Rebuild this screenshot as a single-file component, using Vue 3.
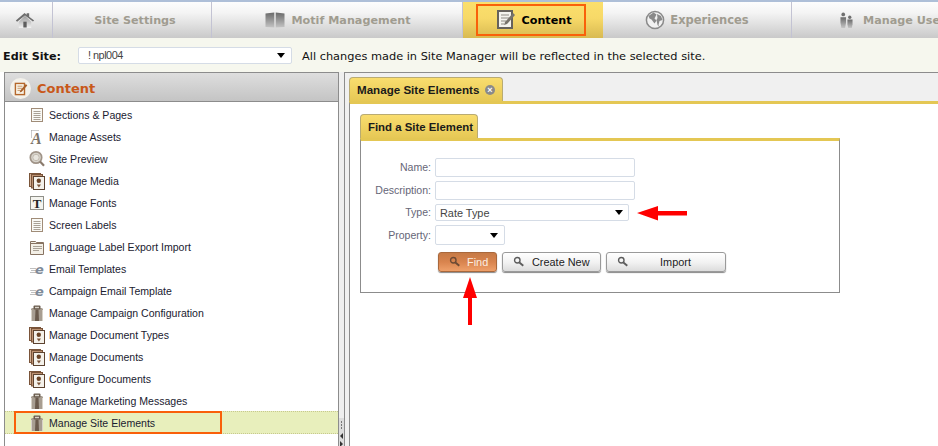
<script setup>
const items = [
  { label: 'Sections & Pages', icon: 'page' },
  { label: 'Manage Assets', icon: 'asset' },
  { label: 'Site Preview', icon: 'lens' },
  { label: 'Manage Media', icon: 'media' },
  { label: 'Manage Fonts', icon: 'font' },
  { label: 'Screen Labels', icon: 'page' },
  { label: 'Language Label Export Import', icon: 'folder' },
  { label: 'Email Templates', icon: 'mail' },
  { label: 'Campaign Email Template', icon: 'mail' },
  { label: 'Manage Campaign Configuration', icon: 'tie' },
  { label: 'Manage Document Types', icon: 'media' },
  { label: 'Manage Documents', icon: 'media' },
  { label: 'Configure Documents', icon: 'media' },
  { label: 'Manage Marketing Messages', icon: 'tie' },
  { label: 'Manage Site Elements', icon: 'tie', active: true },
]
</script>

<template>
  <div class="app">
    <svg class="defs" width="0" height="0">
      <defs>
        <linearGradient id="g-nav" x1="0" y1="0" x2="0" y2="1">
          <stop offset="0" stop-color="#6a6a6a" />
          <stop offset="1" stop-color="#c4c4c4" />
        </linearGradient>
        <linearGradient id="g-home" x1="0" y1="0" x2="0" y2="1">
          <stop offset="0" stop-color="#9a9a9a" />
          <stop offset="1" stop-color="#f2f2f2" />
        </linearGradient>
        <symbol id="i-page" viewBox="0 0 18 18">
          <rect x="3.5" y="2.5" width="11" height="13" fill="#fafaf6" stroke="#a08c78" />
          <path d="M5.5 5.5h7M5.5 7.5h7M5.5 9.5h7M5.5 11.5h7M5.5 13.5h7" stroke="#a9a196" />
        </symbol>
        <symbol id="i-asset" viewBox="0 0 18 18">
          <path d="M3.5 2.5h7M3.5 2.5v8" stroke="#999" stroke-dasharray="1 1" fill="none" />
          <text x="3" y="16" class="svg-a">A</text>
        </symbol>
        <symbol id="i-lens" viewBox="0 0 18 18">
          <circle cx="8" cy="7.5" r="5.7" fill="#d8d4cc" stroke="#a09488" stroke-width="1.7" />
          <circle cx="8" cy="7.5" r="3.2" fill="#e8e5de" stroke="#c2bbb0" />
          <path d="M12 11.5l4 4.2" stroke="#8a7a6c" stroke-width="2.2" />
        </symbol>
        <symbol id="i-media" viewBox="0 0 18 18">
          <rect x="1.5" y="1.5" width="11" height="13" fill="#d6b398" stroke="#7a5439" />
          <rect x="3.5" y="2.5" width="11" height="13.5" fill="#bd9272" stroke="#7a5439" />
          <rect x="5.5" y="4.5" width="11" height="13" fill="#f4f1ea" stroke="#5d4330" />
          <circle cx="10.8" cy="8.7" r="2.2" fill="#6b4427" />
          <path d="M8.8 12.5h4.2l-2.1 3z" fill="#7a5439" />
        </symbol>
        <symbol id="i-font" viewBox="0 0 18 18">
          <rect x="2.5" y="2.5" width="13" height="13" fill="#f4f4ef" stroke="#8f8f88" />
          <text x="9" y="14" class="svg-t">T</text>
        </symbol>
        <symbol id="i-folder" viewBox="0 0 18 18">
          <path d="M2.5 3.5h5l1 1h7v12h-13z" fill="#f3efe6" stroke="#877362" />
          <path d="M2.5 5.5h13" stroke="#877362" />
          <path d="M5 8.5h9M5 10.5h9M5 12.5h6" stroke="#a9a196" />
        </symbol>
        <symbol id="i-mail" viewBox="0 0 18 18">
          <path d="M2 8.5h6M3 10.5h5M2 12.5h6" stroke="#c0c0c0" />
          <text x="7" y="14" class="svg-e">e</text>
        </symbol>
        <symbol id="i-tie" viewBox="0 0 18 18">
          <path d="M4 4h10l1 1v12H3V5z" fill="#a89e92" />
          <path d="M3.5 6v11M14.5 6v11" stroke="#d8d2c8" />
          <rect x="5.5" y="1.5" width="7" height="4" rx="1" fill="#6a5c4e" />
          <rect x="7" y="2.8" width="4" height="1.4" fill="#d8d2c8" />
          <path d="M7.5 5.5h3l.5 11.5H7z" fill="#6a5a4c" />
        </symbol>
        <symbol id="i-home" viewBox="0 0 24 20">
          <path d="M4.5 12L12 5l7.5 7v7.5h-15z" fill="url(#g-home)" />
          <path d="M1 10.5L11.5 1.5 14 3.6V2h3v4l6 4.5-1.5 1.4L12 4.5 2.5 12z" fill="#6d6d6d" />
          <rect x="10" y="12" width="4" height="7" fill="#5e5e5e" />
        </symbol>
        <symbol id="i-book" viewBox="0 0 20 16">
          <path d="M0.5 1.5L9.3 0.5v15L0.5 15z" fill="url(#g-nav)" />
          <path d="M19.5 1.5L10.7 0.5v15l8.8-.5z" fill="url(#g-nav)" />
        </symbol>
        <symbol id="i-doc" viewBox="0 0 20 20">
          <rect x="1" y="1" width="14" height="17" fill="#f4f3ee" stroke="#66625c" stroke-width="2" />
          <path d="M4 5h8M4 8h8M4 11h5M4 14h3" stroke="#8d8a83" />
          <path d="M7 15l1-3 8-9 2 2-8 9z" fill="#77736c" />
        </symbol>
        <symbol id="i-doc-o" viewBox="0 0 20 20">
          <rect x="2" y="2" width="13" height="16" fill="#f8f3e6" stroke="#b5682c" stroke-width="2" />
          <path d="M5 6h7M5 9h7M5 12h4" stroke="#c08a5a" stroke-width="1.2" />
          <path d="M8 15l1-3 8-9 2 2-8 9z" fill="#a85f28" />
        </symbol>
        <symbol id="i-globe" viewBox="0 0 20 20">
          <circle cx="10" cy="10" r="8.6" fill="#f1f1f1" stroke="#8a8a8a" stroke-width="1.5" />
          <path d="M3.5 6l5-3.5 3 2-2 4 2 2-2 3-3-4-2-1z" fill="#8a8a8a" />
          <path d="M12 4l4 2 1.5 4-3 1-1 4 1 2-2-2-1-5 1-2z" fill="#8a8a8a" />
        </symbol>
        <symbol id="i-users" viewBox="0 0 14 17">
          <circle cx="3.5" cy="2" r="2" fill="#6f6f6f" />
          <path d="M.5 5h6v6l-1 5.5h-4l-1-5.5z" fill="url(#g-nav)" />
          <circle cx="10.5" cy="5" r="1.8" fill="#6f6f6f" />
          <path d="M8 7.5h5.5v5l-.8 4h-3.9l-.8-4z" fill="url(#g-nav)" />
        </symbol>
        <symbol id="i-find" viewBox="0 0 14 14">
          <circle cx="5" cy="5" r="3.2" fill="none" stroke="currentColor" stroke-width="1.6" />
          <path d="M7.5 7.5l4.5 3.8" stroke="currentColor" stroke-width="2.2" />
        </symbol>
      </defs>
    </svg>

    <nav class="nav">
      <div class="nav__item nav__item--home">
        <svg class="nav__home"><use href="#i-home" /></svg>
      </div>
      <div class="nav__item nav__item--settings">Site Settings</div>
      <div class="nav__item nav__item--motif">
        <svg class="nav__book"><use href="#i-book" /></svg>Motif Management
      </div>
      <div class="nav__item nav__item--content">
        <div class="nav__mark">
          <svg class="nav__doc"><use href="#i-doc" /></svg>Content
        </div>
      </div>
      <div class="nav__item nav__item--exp">
        <svg class="nav__globe"><use href="#i-globe" /></svg>Experiences
      </div>
      <div class="nav__item nav__item--users">
        <svg class="nav__users"><use href="#i-users" /></svg>Manage Users
      </div>
    </nav>

    <div class="site-bar">
      <span class="site-bar__label">Edit Site:</span>
      <div class="select select--site">
        <span>! npl004</span><i class="caret"></i>
      </div>
      <span class="site-bar__note">All changes made in Site Manager will be reflected in the selected site.</span>
    </div>

    <div class="main">
      <aside class="side">
        <div class="side__head">
          <span class="side__badge"><svg class="side__doc"><use href="#i-doc-o" /></svg></span>
          Content
        </div>
        <ul class="side__list">
          <li
            v-for="item in items"
            :key="item.label"
            class="side__row"
            :class="{ 'side__row--active': item.active }"
          >
            <svg class="side__icon"><use :href="'#i-' + item.icon" /></svg>
            <span>{{ item.label }}</span>
            <span v-if="item.active" class="side__mark"></span>
          </li>
        </ul>
      </aside>

      <div class="split">
        <span class="split__grip"></span>
        <span class="split__dots"></span>
        <i class="split__left"></i>
        <i class="split__right"></i>
      </div>

      <section class="work">
        <div class="work__tabs">
          <div class="tab tab--outer">
            Manage Site Elements
            <span class="tab__close">×</span>
          </div>
        </div>
        <div class="work__body">
          <div class="finder">
            <div class="tab tab--inner">Find a Site Element</div>
            <div class="finder__box">
              <div class="field">
                <label>Name:</label>
                <div class="input"></div>
              </div>
              <div class="field">
                <label>Description:</label>
                <div class="input"></div>
              </div>
              <div class="field field--type">
                <label>Type:</label>
                <div class="select select--type"><span>Rate Type</span><i class="caret"></i></div>
              </div>
              <div class="field field--prop">
                <label>Property:</label>
                <div class="select select--prop"><i class="caret"></i></div>
              </div>
              <div class="actions">
                <button class="btn btn--find">
                  <svg class="btn__icon"><use href="#i-find" /></svg>Find
                </button>
                <button class="btn btn--create">
                  <svg class="btn__icon"><use href="#i-find" /></svg>Create New
                </button>
                <button class="btn btn--import">
                  <svg class="btn__icon"><use href="#i-find" /></svg><span>Import</span>
                </button>
              </div>
            </div>
          </div>
          <svg class="arrow arrow--type" width="50" height="16" viewBox="0 0 50 16">
            <path d="M0 8L21 1v5h29v4.500H21v5z" fill="#f00" />
          </svg>
          <svg class="arrow arrow--find" width="16" height="48" viewBox="0 0 16 48">
            <path d="M8 0l7 21h-5v27H6V21H1z" fill="#f00" />
          </svg>
        </div>
      </section>
    </div>
  </div>
</template>

<style>
html,
body {
  margin: 0;
  height: 100%;
  overflow: hidden;
  background: #fff;
}
.svg-a {
  font: italic bold 16px "Liberation Serif", serif;
  fill: #7d746a;
}
.svg-t {
  font: bold 13px "Liberation Serif", serif;
  fill: #222;
  text-anchor: middle;
}
.svg-e {
  font: italic bold 13px "DejaVu Sans", sans-serif;
  fill: #7f8b99;
}
</style>

<style scoped>
.app {
  width: 938px;
  height: 446px;
  overflow: hidden;
  font-family: "Liberation Sans", Arial, sans-serif;
  font-size: 10.55px;
  color: #111;
  border-top: 2px solid #aebfd8;
  box-sizing: border-box;
}

.defs {
  position: absolute;
}

svg {
  flex: none;
}

/* top navigation */
.nav {
  display: flex;
  height: 36px;
  overflow: hidden;
}

.nav__item {
  display: flex;
  flex: none;
  align-items: center;
  justify-content: center;
  box-sizing: border-box;
  border-right: 1px solid #c3c3d3;
  background: linear-gradient(#fdfdfd, #f4f4f4 30%, #c9c9c9);
  font: bold 11.2px "DejaVu Sans", sans-serif;
  color: #a09c90;
}

.nav__item--home { width: 53px; }
.nav__item--settings { width: 159px; padding-left: 6px; }
.nav__item--motif { width: 251px; padding-left: 2px; }
.nav__item--exp { width: 189px; font-size: 11.5px; }
.nav__item--users {
  width: 146px;
  justify-content: flex-start;
  padding-left: 48px;
  border-right: 0;
  white-space: nowrap;
}

.nav__item--content {
  width: 140px;
  border-right: 0;
  background: linear-gradient(#fbdf6c, #f7d968 45%, #d8ba52);
  color: #000;
}

.nav__mark {
  display: flex;
  align-items: center;
  box-sizing: border-box;
  width: 110px;
  height: 32px;
  margin-left: -5px;
  padding-left: 19px;
  border: 2px solid #f9600a;
}

.nav__home { width: 20px; height: 18px; margin-left: -2px; }
.nav__book { width: 20px; height: 16px; margin-right: 6px; }
.nav__doc { width: 20px; height: 20px; margin-right: 5px; }
.nav__globe { width: 20px; height: 20px; margin-right: 5px; }
.nav__users { width: 13px; height: 17px; margin-right: 10px; }

/* edit site bar */
.site-bar {
  display: flex;
  align-items: center;
  height: 34px;
  background: #f6f7ee;
  box-sizing: border-box;
  padding-left: 3px;
  font: 11.35px "DejaVu Sans", sans-serif;
}

.site-bar__label {
  width: 75px;
  padding-top: 2px;
  font-weight: bold;
  font-size: 11.2px;
}

.site-bar__note {
  margin-left: 10px;
  padding-top: 2px;
  white-space: nowrap;
}

.select {
  display: flex;
  align-items: center;
  justify-content: space-between;
  box-sizing: border-box;
  background: #fff;
  border: 1px solid #d5dce6;
  border-radius: 2px;
  padding: 0 5px 0 4px;
  font: 10.9px "Liberation Sans", sans-serif;
  color: #444;
}

.select--site {
  width: 214px;
  height: 17px;
  padding: 0 6px 0 9px;
  letter-spacing: -0.5px;
}

.caret {
  width: 0;
  height: 0;
  border-left: 4.5px solid transparent;
  border-right: 4.5px solid transparent;
  border-top: 5px solid #000;
}

/* main columns */
.main {
  display: flex;
  height: 374px;
}

.side {
  flex: none;
  width: 335px;
  margin-left: 4px;
  box-sizing: border-box;
  border-left: 1px solid #8c8c8c;
  border-right: 1px solid #8c8c8c;
  border-top: 1px solid #8c8c8c;
  background: #fff;
}

.side__head {
  display: flex;
  align-items: center;
  height: 29px;
  box-sizing: border-box;
  border-bottom: 1px solid #8c8c8c;
  background: linear-gradient(#dedede, #c4c4c4);
  padding: 3px 0 0 5px;
  font: bold 13px "DejaVu Sans", sans-serif;
  color: #c8581a;
}

.side__badge {
  display: flex;
  align-items: center;
  justify-content: center;
  width: 21px;
  height: 21px;
  margin-right: 6px;
  border-radius: 50%;
  background: #f3f1ea;
}

.side__doc {
  width: 14px;
  height: 14px;
}

.side__list {
  list-style: none;
  margin: 2px 0 0;
  padding: 0;
}

.side__row {
  position: relative;
  display: flex;
  align-items: center;
  height: 22px;
  padding-left: 23px;
  color: #1a2130;
}

.side__icon {
  width: 18px;
  height: 18px;
  margin-right: 3px;
}

.side__row--active {
  height: 23px;
  box-sizing: border-box;
  margin-top: -1px;
  background: #e8efbc;
  border-top: 1px dotted #c7c98e;
  border-bottom: 1px dotted #c7c98e;
}

.side__mark {
  position: absolute;
  left: 9px;
  top: -1px;
  width: 208px;
  height: 23px;
  box-sizing: border-box;
  border: 2px solid #f9600a;
}

/* splitter */
.split {
  position: relative;
  flex: none;
  width: 5px;
  background: #efefef;
}

.split__grip {
  position: absolute;
  left: 0;
  right: 0;
  top: 346px;
  bottom: 0;
  background: #dddddd;
}

.split__dots {
  position: absolute;
  left: 2px;
  top: 349px;
  width: 1px;
  height: 9px;
  background: repeating-linear-gradient(#777 0 2px, transparent 2px 3px);
}

.split__left,
.split__right {
  position: absolute;
  left: 1px;
  width: 0;
  height: 0;
  border-top: 3px solid transparent;
  border-bottom: 3px solid transparent;
}

.split__left { top: 361px; border-right: 3px solid #333; }
.split__right { top: 369px; border-left: 3px solid #333; }

/* working area */
.work {
  flex: 1;
  min-width: 0;
  box-sizing: border-box;
  border-left: 1px solid #8c8c8c;
  border-top: 1px solid #8c8c8c;
  background: #f0f0f0;
}

.work__tabs {
  display: flex;
  height: 28px;
  box-sizing: border-box;
  padding: 4px 0 0 4px;
}

.tab {
  box-sizing: border-box;
  display: flex;
  align-items: center;
  border: 1px solid #b9ab72;
  border-bottom: 0;
  border-radius: 4px 4px 0 0;
  background: linear-gradient(#f9dd6e, #e6c855);
  font: bold 11.6px "Liberation Sans", sans-serif;
  color: #1a1a1a;
  white-space: nowrap;
}

.tab--outer {
  width: 154px;
  height: 24px;
  padding-left: 7px;
}

.tab--inner {
  width: 118px;
  height: 24px;
  padding-left: 7px;
  font-size: 11.4px;
}

.tab__close {
  display: flex;
  align-items: center;
  justify-content: center;
  width: 10px;
  height: 10px;
  margin: 0 7px 0 auto;
  border-radius: 50%;
  background: #8a8a8a;
  color: #fff;
  font: bold 9px/10px "Liberation Sans", sans-serif;
}

.work__body {
  position: relative;
  height: 346px;
  margin-left: 4px;
  border-top: 3px solid #e4c754;
  border-left: 1px solid #8c8c8c;
  background: #fff;
  padding: 10px 0 0 10px;
  box-sizing: border-box;
}

.finder {
  width: 480px;
}

.finder__box {
  box-sizing: border-box;
  height: 155px;
  border: 1px solid #8c8c8c;
  border-top: 3px solid #e4c754;
  background: #fff;
  padding-top: 17px;
}

.field {
  display: flex;
  align-items: center;
  height: 19px;
  margin-bottom: 4px;
}

.field label {
  width: 70px;
  margin-right: 4px;
  padding-bottom: 2px;
  text-align: right;
  color: #667;
}

.field--prop label {
  padding-bottom: 0;
}

.input {
  width: 200px;
  height: 19px;
  box-sizing: border-box;
  background: #fff;
  border: 1px solid #d5dce6;
  border-radius: 2px;
}

.field--type { height: 17px; }
.field--prop { height: 20px; }

.select--type {
  width: 194px;
  height: 17px;
}

.select--prop {
  width: 70px;
  height: 20px;
  padding-right: 6px;
  justify-content: flex-end;
}

.actions {
  display: flex;
  gap: 5px;
  margin: 7px 0 0 77px;
}

.btn {
  display: flex;
  align-items: center;
  box-sizing: border-box;
  height: 20px;
  padding: 0 0 0 10px;
  border: 1px solid #9a9a9a;
  border-radius: 3px;
  background: linear-gradient(#fff, #f1f1f1 55%, #dcdcdc);
  box-shadow: 0 1px 1px #888;
  font: 10.9px "Liberation Sans", sans-serif;
  color: #222;
}

.btn__icon {
  width: 12px;
  height: 12px;
  margin-right: 7px;
  color: #5c5c5c;
}

.btn--find {
  width: 59px;
  border-color: #a9683c;
  background: linear-gradient(#c67a46, #d9844e 50%, #eea06a);
  color: #fbeee2;
}

.btn--find .btn__icon { color: #6c4a34; margin-right: 6px; }
.btn--create { width: 99px; }

.btn--import {
  width: 120px;
  padding-right: 10px;
}

.btn--import span {
  flex: 1;
  text-align: center;
}

.arrow {
  position: absolute;
}

.arrow--type { left: 287px; top: 101px; }
.arrow--find { left: 112px; top: 173px; }
</style>
